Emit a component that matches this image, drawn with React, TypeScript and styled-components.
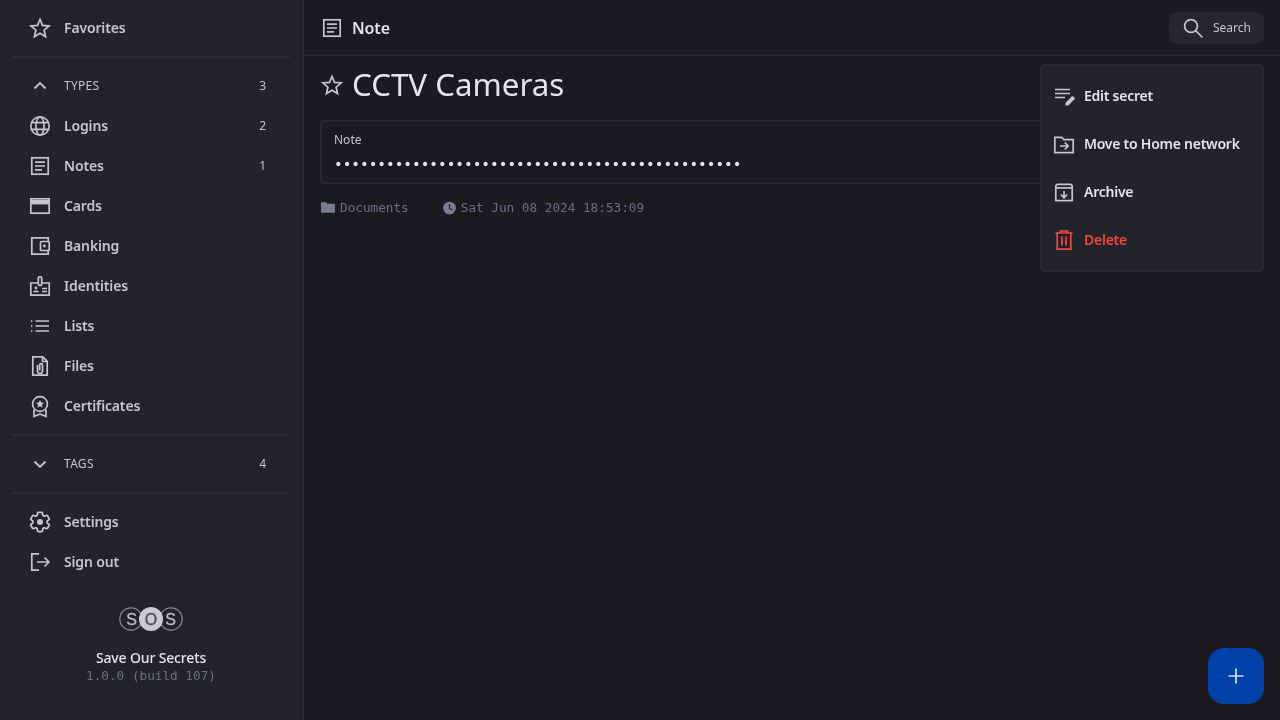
import React from "react";
import styled, { createGlobalStyle } from "styled-components";

const Global = createGlobalStyle`
  html, body { margin: 0; height: 100%; background: #1b1b1f; overflow: hidden; }
  #root { height: 100%; }
  * { box-sizing: border-box; }
`;

const UI = `"Noto Sans", sans-serif`;
const MONO = `"DejaVu Sans Mono", monospace`;

const Shell = styled.div`
  display: flex;
  width: 1280px;
  height: 720px;
  position: relative;
  font-family: ${UI};
  color: #e4e4e9;
  will-change: transform;
`;
const Sidebar = styled.aside`
  width: 304px;
  flex: none;
  background: #232429;
  border-right: 1px solid #2f3036;
  padding: 8px 0 0 12px;
  display: flex;
  flex-direction: column;
`;
const Divider = styled.div`
  width: 278px;
  height: 2px;
  margin: 8px 0;
  background: #2c2d33;
`;
const NavRow = styled.div<{ $caption?: boolean }>`
  height: 40px;
  flex: none;
  width: 254px;
  padding-left: 16px;
  display: flex;
  align-items: center;
  color: #c5c5ce;
  font-size: ${(p) => (p.$caption ? "12px" : "14px")};
  font-weight: ${(p) => (p.$caption ? 400 : 600)};
  letter-spacing: ${(p) => (p.$caption ? "0.3px" : "-0.15px")};
`;
const NavLabel = styled.span`
  margin-left: 12px;
  flex: 1;
  padding-bottom: 2px;
`;
const Count = styled.span`
  font-size: 12px;
  font-weight: 400;
  letter-spacing: 0;
  color: #c5c5ce;
  padding-bottom: 2px;
`;
const Icon = styled.svg<{ $size?: number }>`
  width: ${(p) => p.$size ?? 24}px;
  height: ${(p) => p.$size ?? 24}px;
  flex: none;
  fill: none;
  stroke: currentColor;
  stroke-width: 1.7;
  display: block;
`;
const Brand = styled.div`
  margin-top: 25px;
  width: 278px;
  display: flex;
  flex-direction: column;
  align-items: center;
`;
const BrandName = styled.div`
  margin-top: 17px;
  font-size: 14px;
  line-height: 20px;
  font-weight: 500;
  letter-spacing: -0.15px;
  color: #e4e4e9;
`;
const Version = styled.div`
  font-family: ${MONO};
  font-size: 12.7px;
  line-height: 16px;
  color: #6d6e82;
`;
const Main = styled.main`
  flex: 1;
  min-width: 0;
  display: flex;
  flex-direction: column;
`;
const Header = styled.header`
  height: 56px;
  flex: none;
  border-bottom: 2px solid #26282d;
  display: flex;
  align-items: center;
  padding: 2px 16px 0;
  color: #c5c5ce;
`;
const HeaderTitle = styled.div`
  margin-left: 8px;
  flex: 1;
  font-size: 16px;
  font-weight: 600;
  letter-spacing: -0.1px;
  color: #e4e4e9;
`;
const SearchButton = styled.div`
  width: 95px;
  height: 32px;
  border-radius: 8px;
  background: #25272d;
  display: flex;
  align-items: center;
  padding-left: 12px;
  font-size: 12px;
  color: #c5c5ce;
  span { margin-left: 8px; padding-bottom: 1px; }
`;
const Content = styled.div`
  padding: 12px 16px 0;
`;
const TitleRow = styled.div`
  display: flex;
  align-items: center;
  height: 36px;
  color: #c5c5ce;
`;
const TitleStar = styled.span`
  display: block;
  margin-bottom: 3px;
`;
const Title = styled.h1`
  margin: 0 0 0 8px;
  padding-bottom: 4px;
  font-size: 31.3px;
  font-weight: 400;
  color: #e4e4e9;
  line-height: 36px;
`;
const Card = styled.section`
  margin-top: 16px;
  height: 64px;
  border: 2px solid #26282d;
  border-radius: 4px;
  padding: 10px 12px;
`;
const CardLabel = styled.div`
  font-size: 12px;
  line-height: 16px;
  color: #c5c5ce;
`;
const Dots = styled.div`
  margin-top: 7px;
  font-family: ${MONO};
  font-size: 14.4px;
  line-height: 18px;
  color: #e4e4e9;
  white-space: nowrap;
  letter-spacing: 0.005px;
`;
const Meta = styled.div`
  margin-top: 16px;
  display: flex;
  align-items: center;
  font-family: ${MONO};
  font-size: 12.7px;
  line-height: 16px;
  color: #6d6e82;
`;
const MetaItem = styled.div`
  display: flex;
  align-items: center;
  gap: 4px;
  margin-right: 33px;
`;
const Menu = styled.nav`
  position: absolute;
  left: 1040px;
  top: 64px;
  width: 224px;
  height: 208px;
  padding: 8px 0;
  background: #232429;
  border: 1px solid #2a2b31;
  border-radius: 4px;
`;
const MenuItem = styled.div<{ $danger?: boolean }>`
  height: 48px;
  display: flex;
  align-items: center;
  padding-left: 11px;
  gap: 8px;
  font-size: 14px;
  font-weight: 600;
  letter-spacing: -0.25px;
  color: ${(p) => (p.$danger ? "#f1453d" : "#e4e4e9")};
  svg { color: ${(p) => (p.$danger ? "#f1453d" : "#c5c5ce")}; }
  span { padding-bottom: 4px; }
`;
const Fab = styled.div`
  position: absolute;
  left: 1208px;
  top: 648px;
  width: 56px;
  height: 56px;
  border-radius: 16px;
  background: #0041a8;
  color: #d5e0f7;
  display: flex;
  align-items: center;
  justify-content: center;
`;

const Svg: React.FC<React.PropsWithChildren<{ size?: number }>> = ({ size, children }) => (
  <Icon $size={size} viewBox="0 0 24 24">{children}</Icon>
);

const STAR = "M12 3.4l2.5 6 6.6.5-5 4.3 1.5 6.4L12 17.2l-5.6 3.4 1.5-6.4-5-4.3 6.6-.5z";
const Star = ({ size }: { size?: number }) => <Svg size={size}><path d={STAR} /></Svg>;
const Chevron = ({ up }: { up?: boolean }) => (
  <Svg><path d={up ? "M6.5 14.5L12 9l5.5 5.5" : "M6.5 9.5L12 15l5.5-5.5"} strokeWidth="1.8" /></Svg>
);
const Globe = () => (
  <Svg>
    <circle cx="12" cy="12" r="9.2" />
    <ellipse cx="12" cy="12" rx="4" ry="9.2" />
    <path d="M3.5 8.7h17M3.5 15.3h17" />
  </Svg>
);
const Note = () => (
  <Svg>
    <rect x="3.8" y="3.8" width="16.4" height="16.4" />
    <path d="M7 8.2h10M7 12h10M7 15.8h7" />
  </Svg>
);
const CardIcon = () => (
  <Svg>
    <rect x="2.8" y="4.8" width="18.4" height="14.4" />
    <path d="M3 8.2h18" strokeWidth="4.4" />
  </Svg>
);
const Wallet = () => (
  <Svg>
    <path d="M20.2 7.5V3.8H3.8v16.4h16.4v-3.7" />
    <rect x="12.5" y="7.5" width="8.7" height="9" rx="1" />
    <circle cx="16.3" cy="12" r="1.4" fill="currentColor" stroke="none" />
  </Svg>
);
const Identity = () => (
  <Svg>
    <path d="M10 9H2.8v12.2h18.4V9H14" />
    <rect x="10.3" y="2.8" width="3.4" height="8.6" rx="1.2" />
    <circle cx="8" cy="14" r="1.4" fill="currentColor" stroke="none" />
    <path d="M5.2 18.2h5.6v-1c-1.2-1-4.4-1-5.6 0z" fill="currentColor" stroke="none" />
    <path d="M14 14.5h5M14 17.5h5" />
  </Svg>
);
const Lists = () => (
  <Svg>
    <path d="M7.5 7h13.5M7.5 12h13.5M7.5 17h13.5" />
    <path d="M3 6.4h1.3M3 7.6h1.3M3 11.4h1.3M3 12.6h1.3M3 16.4h1.3M3 17.6h1.3" strokeWidth="0.9" />
  </Svg>
);
const FileClip = () => (
  <Svg>
    <path d="M4.8 2.8h10l4.4 4.6v13.8H4.8z" />
    <path d="M14.5 3v4.5h4.5" />
    <path d="M9.5 11v6a2.5 2.5 0 0 0 5 0v-6a1.4 1.4 0 0 0-2.8 0v5.5" />
  </Svg>
);
const Certificate = () => (
  <Svg>
    <circle cx="12" cy="10" r="7.4" />
    <path d="M12 5.8l1.2 2.8 3 .2-2.3 2 .7 3-2.6-1.6-2.6 1.6.7-3-2.3-2 3-.2z" fill="currentColor" stroke="none" />
    <path d="M6 15.5v7l6-2.6 6 2.6v-7" />
  </Svg>
);
const Gear = () => (
  <Svg>
    <path d="M19.14 12.94c.04-.3.06-.61.06-.94 0-.32-.02-.64-.07-.94l2.03-1.58c.18-.14.23-.41.12-.61l-1.92-3.32c-.12-.22-.37-.29-.59-.22l-2.39.96c-.5-.38-1.03-.7-1.62-.94l-.36-2.54c-.04-.24-.24-.41-.48-.41h-3.84c-.24 0-.43.17-.47.41l-.36 2.54c-.59.24-1.13.57-1.62.94l-2.39-.96c-.22-.08-.47 0-.59.22L2.74 8.87c-.12.21-.08.47.12.61l2.03 1.58c-.05.3-.09.63-.09.94s.02.64.07.94l-2.03 1.58c-.18.14-.23.41-.12.61l1.92 3.32c.12.22.37.29.59.22l2.39-.96c.5.38 1.03.7 1.62.94l.36 2.54c.05.24.24.41.48.41h3.84c.24 0 .44-.17.47-.41l.36-2.54c.59-.24 1.13-.56 1.62-.94l2.39.96c.22.08.47 0 .59-.22l1.92-3.32c.12-.22.07-.47-.12-.61l-2.01-1.58z" />
    <circle cx="12" cy="12" r="3" fill="currentColor" stroke="none" />
  </Svg>
);
const SignOut = () => (
  <Svg>
    <path d="M11 3.8H3.8v16.4H11" />
    <path d="M9 12h12M16.5 7.5L21 12l-4.5 4.5" />
  </Svg>
);
const Search = () => (
  <Svg>
    <circle cx="10" cy="10" r="6.4" />
    <path d="M14.6 14.6L21.5 21.5" />
  </Svg>
);
const Edit = () => (
  <Svg>
    <path d="M3 4.5h15M3 8.5h15M3 12.5h10" />
    <path d="M13.5 20.5v-2.8l6-6c.6-.6 1.5-.6 2 0l.8.8c.6.6.6 1.4 0 2l-6 6z" fill="currentColor" stroke="none" />
  </Svg>
);
const Move = () => (
  <Svg>
    <path d="M2.8 19.7V4.3h7l2 2.4h9.4v13z" />
    <path d="M8 13h8M12.8 9.5l3.4 3.5-3.4 3.5" />
  </Svg>
);
const Archive = () => (
  <Svg>
    <path d="M3.8 6.7V4.7l1.5-1.4h13.4l1.5 1.4v15H3.8z" />
    <path d="M3.8 6.9h16.4" />
    <path d="M12 10v6.5M8.8 13.5l3.2 3.2 3.2-3.2" />
  </Svg>
);
const Trash = () => (
  <Svg>
    <path d="M3.5 4h17M8.5 4V2h7v2" />
    <path d="M5.2 4v16.2h13.6V4" />
    <path d="M10 7.5v9M14 7.5v9" />
  </Svg>
);
const Plus = () => <Svg><path d="M12 4.5v15M4.5 12h15" /></Svg>;
const Folder = () => (
  <svg width="16" height="16" viewBox="0 0 16 16" fill="#7a7c93">
    <path d="M1 3.2c0-.6.4-1 1-1h4l1.5 1.6H14c.6 0 1 .4 1 1v7c0 .6-.4 1-1 1H2c-.6 0-1-.4-1-1z" />
  </svg>
);
const Clock = () => (
  <svg width="15" height="15" viewBox="0 0 16 16">
    <circle cx="8" cy="7.5" r="6.8" fill="#7a7c93" />
    <path d="M8 3.5v4.4l3 1.8" stroke="#1b1b1f" strokeWidth="1.3" fill="none" />
  </svg>
);
const LogoText = styled.text<{ $dark?: boolean }>`
  font-family: "Liberation Sans", sans-serif;
  font-size: 16px;
  font-weight: 400;
  stroke: currentColor;
  stroke-width: 0.3;
  text-anchor: middle;
  color: ${(p) => (p.$dark ? "#4a4b55" : "#b9bac4")};
  fill: currentColor;
`;
const Logo = () => (
  <svg width="64" height="24" viewBox="0 0 64 24">
    <circle cx="12" cy="12" r="11.2" fill="none" stroke="#85868f" strokeWidth="1.2" />
    <circle cx="52" cy="12" r="11.2" fill="none" stroke="#85868f" strokeWidth="1.2" />
    <circle cx="32" cy="12" r="12" fill="#c9cad4" />
    <LogoText x="12.5" y="17.6">S</LogoText>
    <LogoText x="32" y="17.6" $dark>O</LogoText>
    <LogoText x="51.5" y="17.6">S</LogoText>
  </svg>
);

const types: [string, React.ReactNode, string?][] = [
  ["Logins", <Globe />, "2"],
  ["Notes", <Note />, "1"],
  ["Cards", <CardIcon />],
  ["Banking", <Wallet />],
  ["Identities", <Identity />],
  ["Lists", <Lists />],
  ["Files", <FileClip />],
  ["Certificates", <Certificate />],
];

export default function App() {
  return (
    <Shell>
      <Global />
      <Sidebar>
        <NavRow><Star /><NavLabel>Favorites</NavLabel></NavRow>
        <Divider />
        <NavRow $caption><Chevron up /><NavLabel>TYPES</NavLabel><Count>3</Count></NavRow>
        {types.map(([label, icon, count]) => (
          <NavRow key={label}>{icon}<NavLabel>{label}</NavLabel>{count && <Count>{count}</Count>}</NavRow>
        ))}
        <Divider />
        <NavRow $caption><Chevron /><NavLabel>TAGS</NavLabel><Count>4</Count></NavRow>
        <Divider />
        <NavRow><Gear /><NavLabel>Settings</NavLabel></NavRow>
        <NavRow><SignOut /><NavLabel>Sign out</NavLabel></NavRow>
        <Brand>
          <Logo />
          <BrandName>Save Our Secrets</BrandName>
          <Version>1.0.0 (build 107)</Version>
        </Brand>
      </Sidebar>
      <Main>
        <Header>
          <Note />
          <HeaderTitle>Note</HeaderTitle>
          <SearchButton><Search /><span>Search</span></SearchButton>
        </Header>
        <Content>
          <TitleRow>
            <TitleStar><Star /></TitleStar>
            <Title>CCTV Cameras</Title>
          </TitleRow>
          <Card>
            <CardLabel>Note</CardLabel>
            <Dots>{"•".repeat(47)}</Dots>
          </Card>
          <Meta>
            <MetaItem><Folder />Documents</MetaItem>
            <MetaItem><Clock />Sat Jun 08 2024 18:53:09</MetaItem>
          </Meta>
        </Content>
      </Main>
      <Menu>
        <MenuItem><Edit /><span>Edit secret</span></MenuItem>
        <MenuItem><Move /><span>Move to Home network</span></MenuItem>
        <MenuItem><Archive /><span>Archive</span></MenuItem>
        <MenuItem $danger><Trash /><span>Delete</span></MenuItem>
      </Menu>
      <Fab><Plus /></Fab>
    </Shell>
  );
}
